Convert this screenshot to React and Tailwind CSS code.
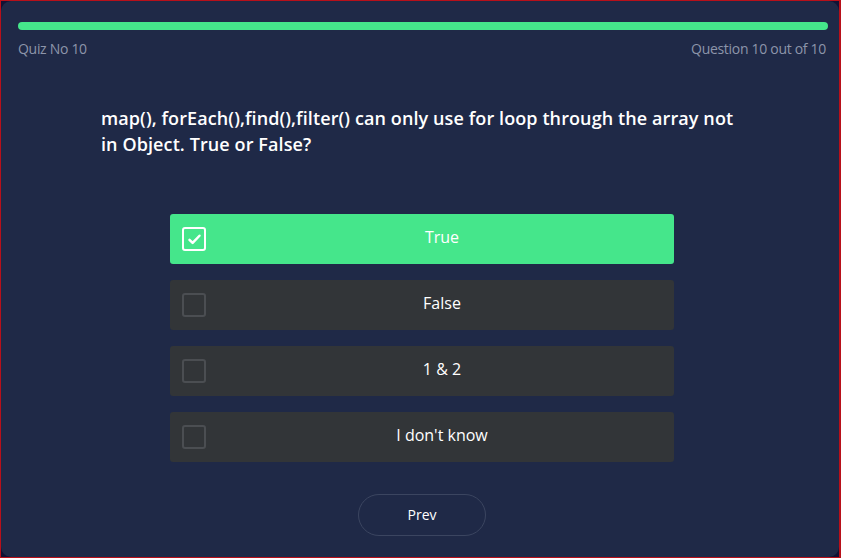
import React from "react";

const options = ["True", "False", "1 & 2", "I don't know"];

function Option({ label, selected }) {
  return (
    <div
      className={
        "flex h-[50px] items-center rounded-[3px] pl-3 " +
        (selected ? "bg-[#45e68b]" : "bg-[#323538]")
      }
    >
      <div
        className={
          "flex h-6 w-6 shrink-0 items-center justify-center rounded-[3px] border-2 " +
          (selected ? "border-white" : "border-[#4b4e52]")
        }
      >
        {selected && (
          <svg viewBox="0 0 24 24" className="h-[15px] w-[15px]" fill="none" stroke="white" strokeWidth="4" strokeLinecap="round" strokeLinejoin="round">
            <path d="M4 12.5l5 5L20 6" />
          </svg>
        )}
      </div>
      <span className="mb-[4px] ml-1 flex-1 text-center text-[16px] text-white">{label}</span>
    </div>
  );
}

export default function App() {
  return (
    <div className="h-[558px] w-[841px] bg-[#b8101a] py-px pl-px pr-[2px]" style={{ fontFamily: "'Open Sans', 'Liberation Sans', sans-serif" }}>
      <div className="h-full w-full bg-[#111235]">
        <div className="flex h-full w-full flex-col rounded-[10px] bg-[#1f2947] pl-[17px] pr-[11px] pt-[21px]">
          <div className="h-[8px] w-full rounded-full bg-[#45e68b]" />
          <div className="mt-[8px] flex justify-between pr-[2px] text-[14px] tracking-[-0.3px] text-[#8d95aa]">
            <span>Quiz No 10</span>
            <span>Question 10 out of 10</span>
          </div>
          <p className="ml-[83px] mt-[46px] w-[640px] text-[18px] font-semibold leading-[26px] tracking-[0.1px] text-white">
            map(), forEach(),find(),filter() can only use for loop through the array not in Object. True or False?
          </p>
          <div className="ml-[152px] mt-[57px] flex w-[504px] flex-col gap-4">
            {options.map((o, i) => (
              <Option key={o} label={o} selected={i === 0} />
            ))}
          </div>
          <button className="ml-[340px] mt-[32px] h-[42px] w-[128px] rounded-full border border-[#3b4560] pb-[2px] text-[14px] text-white">
            Prev
          </button>
        </div>
      </div>
    </div>
  );
}
